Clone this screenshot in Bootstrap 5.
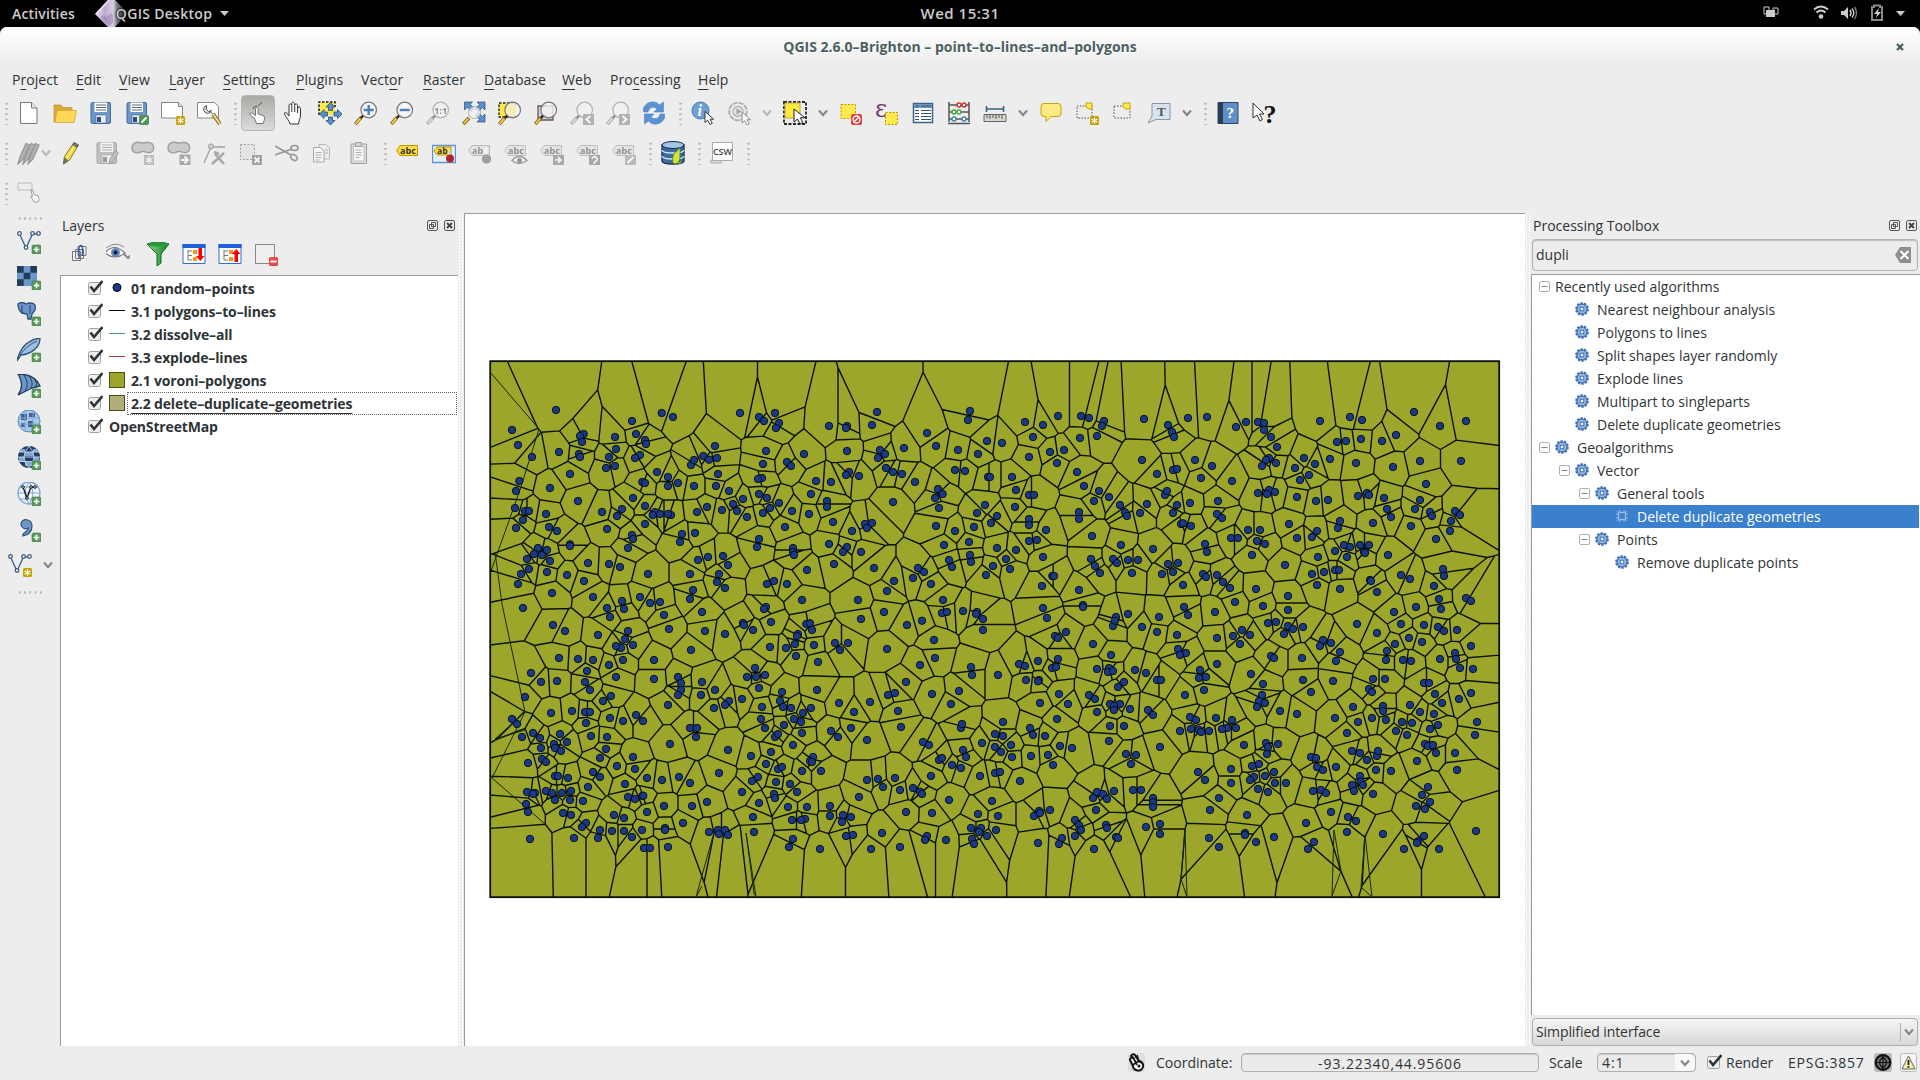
<!DOCTYPE html>
<html lang="en">
<head>
<meta charset="utf-8">
<title>QGIS 2.6.0-Brighton - point-to-lines-and-polygons</title>
<link href="https://cdn.jsdelivr.net/npm/bootstrap@5.3.0/dist/css/bootstrap.min.css" rel="stylesheet">
<style>
:root{--ink:#2e3436;--face:#ededed;--edge:#9b9b99}
body{width:1920px;height:1080px;overflow:hidden;background:#000;color:var(--ink);font:14px/23px "Open Sans","Noto Sans",sans-serif}
.shell-bar{height:27px;color:#ccc;font-weight:600;line-height:27px;letter-spacing:.15px}
.shell-bar .col{flex:1 0 0}
.shell-bar .clock{font-size:15px;letter-spacing:.5px}
.app-logo{width:33px;height:27px;margin:0 -12px 0 20px}
.app-name{letter-spacing:.3px;text-shadow:0 0 2px #000,0 0 2px #000}
.win{height:1053px;background:var(--face);border-radius:7px 7px 0 0}
.win-title{height:38px;line-height:39px;border-radius:7px 7px 0 0;background:linear-gradient(#fff,#ededed);color:#4c5f63;font-weight:700;text-shadow:0 1px #fff}
.menu-row{height:28px;padding-left:12px;line-height:30px}
.menu-row span{white-space:nowrap;letter-spacing:.05px}
.menu-row u,.tree-under{text-underline-offset:4px;text-decoration-thickness:1px}
.tool-row{height:40px;padding-left:0}
.ic{width:24px;height:24px;margin:0 6px;flex:none;display:block;overflow:visible}
.chev{width:10px;height:10px;margin:0 5px;flex:none}
.sep{width:13px;height:24px;flex:none;background:radial-gradient(circle,#b4b4b2 1px,transparent 1.3px) 7px 0/3px 5.3px repeat-y}
.sep.first{width:11px;background-position-x:5px}
.armed{background:linear-gradient(#a7aaa5,#dcdddb);border:1px solid #b8bab6;border-radius:4px;width:34px;height:36px;margin:0 1px;padding:5px 4px}
.armed .ic{margin:0}
.dim{opacity:.5;filter:grayscale(1)}
.side-tools{width:60px;padding-top:4px}
.side-tools .ic{margin:6px 18px 6px 17px}
.hsep{width:25px;height:3px;flex:none;margin-left:17px;background:radial-gradient(circle,#b4b4b2 1px,transparent 1.3px) 0 0/5.3px 3px repeat-x}
.layers-dock{width:398px}
.dock-title{height:25px;line-height:25px;padding-left:2px}
.dock-title svg{width:11px;height:11px;margin-right:3px}
.dock-title svg+svg{margin:0 3px 0 3px}
.layer-tools{height:37px;padding-bottom:5px;padding-left:1px}
.layer-tools .ic:nth-child(2){margin-left:9px}
.layer-tools .ic:nth-child(3){margin-left:10px}
.tree{background:#fff;border:solid var(--edge);border-width:1px 0 0 1px}
.tree .item{height:23px;display:flex;align-items:center;white-space:nowrap;line-height:23px}
.layers{font-weight:700;padding:1px 0 0 27px;letter-spacing:-.15px}
.layers .sym{width:16px;height:16px;margin:0 6px 1px 6px;flex:none}
.tick{width:15px;height:15px;flex:none;overflow:visible}
.layers .tick{margin-bottom:3px}
.focus-row{flex:1;border:1px dotted #666;margin-left:-4px;padding-left:3px;height:23px;line-height:21px;margin-right:1px}
.splitter{width:6px;background:repeating-conic-gradient(#fafafa 0 25%,#e6e6e6 0 50%) 0 0/3px 3px}
.canvas-pane{width:1061px;background:#fff;border:solid var(--edge);border-width:1px 0 0 1px}
.search{height:32px;margin:1px 2px 3px 1px;border:1px solid #b2b2b0;border-radius:4px;background:var(--face);padding:0 6px 0 3px;line-height:22px;box-shadow:inset 0 1px 1px #bbb}
.pm{width:11px;height:11px;margin-right:5px;flex:none}
.algs{letter-spacing:.02px}
.algs .item{line-height:24px}
.gear{width:14px;height:14px;margin:0 8px 2px 0;flex:none}
.l1{padding-left:43px}.l0{padding-left:7px}.lv{padding-left:27px}.lg{padding-left:47px}.ld{padding-left:83px}
.picked{background:#3a80cd;color:#fff;margin-right:1px}
.mode{height:28px;margin:3px 2px 0 1px;border:1px solid #aeaeac;border-radius:4px;background:linear-gradient(#f6f6f6,#d8d8d8);padding-left:3px;line-height:26px;letter-spacing:-.08px}
.drop{border-left:1px solid #b0b0ae}
.status-row{height:34px;padding-bottom:1px}
.status-row>*{flex:none}
.readout{border:1px solid #b0b0ae;border-radius:4px;height:19px;line-height:19px;background:#ebebeb;box-shadow:inset 0 1px 1px #c8c8c8;letter-spacing:.9px}
</style>
</head>
<body>
<svg width="0" height="0" class="position-absolute">
<defs>
<linearGradient id="gl" x1="0" x2="1"><stop offset="0" stop-color="#e9dff2"/><stop offset=".3" stop-color="#bda9d0"/><stop offset=".55" stop-color="#d5d0da"/><stop offset=".68" stop-color="#77737c"/><stop offset="1" stop-color="#111"/></linearGradient>
<linearGradient id="gg" x1="0" x2="1"><stop offset="0" stop-color="#8bd88b"/><stop offset="1" stop-color="#118022"/></linearGradient>
<g id="plus"><rect x="15" y="15" width="9" height="9" rx="1.5" fill="#5a9a5a" stroke="#3d7a3d" stroke-width=".6"/><path d="M19.500 16.700v5.600M16.700 19.500h5.600" stroke="#fff" stroke-width="1.700"/></g>
<g id="star"><rect x="15" y="15" width="9" height="9" rx="1.500" fill="#c9a000"/><path d="M19.500 16.300v6.400M16.500 18l6 3.200M22.500 18l-6 3.200" stroke="#fff" stroke-width="1.200"/></g>
<g id="cursor"><path d="M0 0v11l2.700-2.300 2.200 4.300 2.400-1.200-2.200-4.100h3.500z" fill="#fff" stroke="#222" stroke-width=".9"/></g>
<symbol id="new" viewBox="0 0 24 24"><path d="M3.500 1.500h11l5.500 5.500V22.500h-16.500z" fill="#fff" stroke="#777"/><path d="M14.500 1.500v5.500h5.500" fill="#e8e8e8" stroke="#777"/></symbol>
<symbol id="open" viewBox="0 0 24 24"><path d="M1 4h7l2 2.500h9V10H5L2.500 21H1z" fill="#dca83a" stroke="#c2912c" stroke-width=".7"/><path d="M4 9.500h19.500L21 21.500H2z" fill="#fdd856" stroke="#d6a93a" stroke-width=".8"/></symbol>
<symbol id="save" viewBox="0 0 24 24"><rect x="2" y="1.500" width="19.500" height="21" rx="1.500" fill="#6d97c8" stroke="#426a9a"/><path d="M5.500 1.500h12.500v9.500H5.500z" fill="#fff"/><path d="M7 4h10M7 6.500h10M7 9h10" stroke="#667"/><path d="M7 14h10v8H7z" fill="#eee" stroke="#426a9a" stroke-width=".6"/><path d="M8 16h4v5H8z" fill="#2b5080"/></symbol>
<symbol id="saveas" viewBox="0 0 24 24"><use href="#save"/><rect x="14" y="14" width="10" height="10" rx="2" fill="#4f9358"/><path d="M16.500 21.500l5-5" stroke="#fff" stroke-width="2"/></symbol>
<symbol id="compose" viewBox="0 0 24 24"><path d="M.5 1.500h17l4 4V17H.5z" fill="#fff" stroke="#888"/><path d="M17.500 1.500v4h4" fill="#ddd" stroke="#888"/><use href="#star"/></symbol>
<symbol id="compman" viewBox="0 0 24 24"><path d="M.5 1.500h17l4 4V17H.5z" fill="#fff" stroke="#888"/><path d="M9.500 4.500a4 4 0 1 0 5 5l-3 1-2-2zM12 10l5 4" fill="#ddd" stroke="#555"/><path d="M16 13l7 10" stroke="#7d6a33" stroke-width="4"/><path d="M16 13l7 10" stroke="#f2dc82" stroke-width="2"/></symbol>
<symbol id="touch" viewBox="0 0 24 24"><path d="M10.500 22.500l-2-5L4.500 14c-1.500-2 1-2.600 2-1.500l3 2V8c0-2 2.600-2 2.600 0v5l5 1.500c2 1 1.400 3 1 5l-1 3z" fill="#fff" stroke="#666" stroke-width=".9"/><path d="M7 8a4 4 0 0 1 4-3M12 5l4-4" stroke="#444" fill="none" stroke-width=".9"/></symbol>
<symbol id="pan" viewBox="0 0 24 24"><path d="M8 23c0-3-4-6-5.500-10C2 11 4.500 11 5.500 13L7 15V4.500c0-2 2.500-2 2.700 0V3c0-2.300 2.800-2.300 3 0v1.500c.2-2 2.800-2 2.900 0V7c.4-1.600 2.700-1.400 2.900.5V14c0 3-1.500 5-2 9z" fill="#fff" stroke="#333"/><path d="M9.800 5v6M12.700 5v6M15.600 6v6" stroke="#333"/></symbol>
<symbol id="pansel" viewBox="0 0 24 24"><path d="M1 1h16v13H1z" fill="#ffe94a"/><path d="M1 14V1h16v5" fill="none" stroke="#222" stroke-width="1.600" stroke-dasharray="2.500 1.500"/><path d="M12.500 1.500l4.500 4.500h-2.500v3.500h-4V6H8zM12.500 24l4.500-4.500h-2.500V16h-4v3.500H8zM1.500 13L6 8.500v2.500h3.500v4H6v2.500zM24 13l-4.500-4.500v2.500H16v4h3.500v2.500z" fill="#5c8fc7" stroke="#244f7c" stroke-width=".8"/></symbol>
<g id="lens"><path d="M9.500 14l-3 3.500" stroke="#222" stroke-width="2.600"/><path d="M7 16.500L1.300 23" stroke="#6a5520" stroke-width="3.400"/><path d="M6.300 17.400L1.700 22.600" stroke="#ffce31" stroke-width="1.900"/><circle cx="14.700" cy="9" r="7.800" fill="#f5f5f3" fill-opacity=".8" stroke="#777" stroke-width="1.200"/></g>
<symbol id="zin" viewBox="0 0 24 24"><use href="#lens"/><path d="M14.700 4v10M9.700 9h10" stroke="#4c7fb8" stroke-width="2.400"/></symbol>
<symbol id="zout" viewBox="0 0 24 24"><use href="#lens"/><path d="M9.700 9h10" stroke="#4c7fb8" stroke-width="2.400"/></symbol>
<symbol id="z11" viewBox="0 0 24 24"><use href="#lens"/><text x="14.700" y="12.500" font-size="9.500" font-weight="700" text-anchor="middle" fill="#333">1:1</text></symbol>
<symbol id="zfull" viewBox="0 0 24 24"><path d="M2.500 1h8L8.200 3.300l4 4-3 3-4-4L2.500 9zM23 1v8l-2.500-2.500-4 4-3-3 4-4L15 1zM23 21h-8l2.500-2.500-4-4 3-3 4 4L23 13z" fill="#5c8fc7" stroke="#244f7c" stroke-width=".7"/><path d="M7 17L1.300 23" stroke="#6a5520" stroke-width="3.400"/><path d="M6.300 17.600L1.700 22.600" stroke="#ffce31" stroke-width="1.900"/><circle cx="12.500" cy="11.500" r="6" fill="#f2f2f0" fill-opacity=".75" stroke="#999" stroke-width=".8"/></symbol>
<symbol id="zsel" viewBox="0 0 24 24"><path d="M1 2h16v14H1z" fill="#ffe94a" stroke="#222" stroke-width="1.400" stroke-dasharray="2.500 1.500"/><use href="#lens"/><path d="M9 4.500h9v9H9z" fill="#f6eeb2"/></symbol>
<symbol id="zlay" viewBox="0 0 24 24"><path d="M4 5h15v14H4z" fill="#d8ccd8" stroke="#665566" stroke-width="1.300"/><use href="#lens"/></symbol>
<symbol id="zlast" viewBox="0 0 24 24"><use href="#lens"/><rect x="13" y="13" width="11" height="11" fill="#777"/><path d="M20.500 15l-4 3.500 4 3.500" stroke="#fff" stroke-width="2" fill="none"/></symbol>
<symbol id="znext" viewBox="0 0 24 24"><use href="#lens"/><rect x="13" y="13" width="11" height="11" fill="#777"/><path d="M16.500 15l4 3.500-4 3.500" stroke="#fff" stroke-width="2" fill="none"/></symbol>
<symbol id="refresh" viewBox="0 0 24 24"><path d="M1.500 11V7c3-7 12-8 16-3l4-3v10H12l3-3C12 5 7 6 6 11zM22.500 13v4c-3 7-12 8-16 3l-4 3V13H12l-3 3c3 3 8 2 9-3z" fill="#5b93d2" stroke="#4a82c0" stroke-width=".6"/></symbol>
<symbol id="info" viewBox="0 0 24 24"><circle cx="9.500" cy="9.500" r="8.500" fill="#6f9fd4" stroke="#4a79ae"/><text x="6.500" y="15" font-family="Liberation Serif" font-style="italic" font-weight="700" font-size="16" fill="#fff">i</text><use href="#cursor" x="14" y="10.500"/></symbol>
<symbol id="act" viewBox="0 0 24 24"><circle cx="11" cy="10.500" r="8.800" fill="#eee" stroke="#777" stroke-width="2" stroke-dasharray="5 1"/><circle cx="11" cy="10.500" r="5" fill="#ddd" stroke="#777" stroke-width="1.300"/><path d="M9.500 7.500l5 3-5 3z" fill="#555"/><use href="#cursor" x="15" y="11"/></symbol>
<symbol id="select" viewBox="0 0 24 24"><path d="M1 1h22v22H1z" fill="none" stroke="#222" stroke-width="1.800" stroke-dasharray="3 1.500"/><path d="M2 2h15v15H2z" fill="#ffe93f" stroke="#b9a84a"/><path d="M11 8v13l3.500-3 2.500 5 2.800-1.500-2.500-4.800h4.500z" fill="#fff" stroke="#222"/></symbol>
<symbol id="desel" viewBox="0 0 24 24"><path d="M2 3.500h14.500v14H2z" fill="#ffe94f" stroke="#b89600" stroke-dasharray="2 1.500"/><rect x="12" y="13" width="11" height="11" rx="2" fill="#e04040"/><circle cx="17.500" cy="18.500" r="3.500" fill="none" stroke="#fff" stroke-width="1.300"/><path d="M15 21l5-5" stroke="#fff" stroke-width="1.300"/></symbol>
<symbol id="expr" viewBox="0 0 24 24"><text x="0" y="15.500" font-family="DejaVu Serif" font-size="24" fill="#6d3a6d">ε</text><path d="M10.500 11.500h12v12h-12z" fill="#ffe94f" stroke="#b89600" stroke-dasharray="2 1.500"/></symbol>
<symbol id="table" viewBox="0 0 24 24"><path d="M2.500 2.500h19v19h-19z" fill="#fff" stroke="#3d6382" stroke-width="1.500"/><path d="M3 3h18v4H3z" fill="#6c9ac4"/><path d="M4 5h4M10 5h10M4 9.500h4M10 9.500h10M4 12.500h4M10 12.500h10M4 15.500h4M10 15.500h10M4 18.500h4M10 18.500h10" stroke="#35566f" stroke-width="1.200"/></symbol>
<symbol id="abacus" viewBox="0 0 24 24"><path d="M2 1v20M22 1v20M1 22.500h22M2 4h20M2 11h20M2 18h20" stroke="#555" stroke-width="1.500"/><g fill="#fff" stroke-width="1.500"><g stroke="#c33"><circle cx="12" cy="4" r="2"/><circle cx="17" cy="4" r="2"/></g><g stroke="#4a4"><circle cx="7" cy="11" r="2"/><circle cx="12" cy="11" r="2"/></g><g stroke="#48a"><circle cx="7" cy="18" r="2"/><circle cx="17" cy="18" r="2"/></g></g></symbol>
<symbol id="ruler" viewBox="0 0 24 24"><path d="M3 8h18M3.500 5v6M20.500 5v6" stroke="#35637e" stroke-width="1.600"/><path d="M1 13.500h22v7H1z" fill="#d6d9d0" stroke="#666"/><path d="M4 14v3M7 14v4M10 14v3M13 14v4M16 14v3M19 14v4" stroke="#555"/></symbol>
<symbol id="tip" viewBox="0 0 24 24"><path d="M5 2.500h14q3 0 3 3v7q0 3-3 3h-7L7 20.500v-5H5q-3 0-3-3v-7q0-3 3-3z" fill="#fbea83" stroke="#c9a300"/></symbol>
<symbol id="bmnew" viewBox="0 0 24 24"><path d="M2 5h15v12H2z" fill="none" stroke="#555" stroke-dasharray="1.500 1.500"/><path d="M11 6V2h6v6h-3z" fill="#ffe94f" stroke="#c9a300"/><use href="#star"/></symbol>
<symbol id="bm" viewBox="0 0 24 24"><path d="M3 5h16v12H3z" fill="none" stroke="#555" stroke-dasharray="1.500 1.500"/><path d="M12 6V2h7v6h-4z" fill="#ffe94f" stroke="#c9a300"/></symbol>
<symbol id="annot" viewBox="0 0 24 24"><path d="M5 2.500h18v16H9L1 22l4-7z" fill="#d9e3ee" stroke="#8a97a5"/><text x="10" y="15" font-family="Liberation Serif" font-weight="700" font-size="13" fill="#555">T</text></symbol>
<symbol id="help" viewBox="0 0 24 24"><path d="M2 1.500h20v21H2z" fill="#5f8fc6" stroke="#27486c"/><path d="M2 1.500h5v21H2z" fill="#2b3d52"/><text x="10.500" y="17" font-family="Liberation Serif" font-size="15" font-weight="700" fill="#fff">?</text></symbol>
<symbol id="what" viewBox="0 0 24 24"><path d="M1 2v15l4-3 3 6 2.500-1.500-3-5.500H12z" fill="#fff" stroke="#333"/><text x="11.500" y="22" font-family="Liberation Serif" font-size="26" font-weight="700" fill="#111">?</text></symbol>
<symbol id="pencils" viewBox="0 0 24 24"><path d="M1 23l2-7 6-13.500 4 1.500-7 14zM6 23l2-7 6-13.500 4 1.500-7 14zM11 23l2-7 5.500-13.500 3.500 1.500-6 14z" fill="#777" stroke="#444" stroke-width="1.300"/></symbol>
<symbol id="pencil" viewBox="0 0 24 24"><path d="M4.500 23l1-7.500L15 1.500l4.500 2.500L10.500 19z" fill="#f2dd3e" stroke="#8b7430"/><path d="M8 17l9-14" stroke="#fff7a0"/><path d="M4.500 23l1-6 3.500 2.500zM15 1.500l4.500 2.500-1.500 2.500-4.500-2.500z" fill="#777" stroke="#555" stroke-width=".6"/></symbol>
<symbol id="saveed" viewBox="0 0 24 24"><use href="#save"/><path d="M14 23l1-5 6-8 2.500 2-6 8.500z" fill="#999" stroke="#555"/></symbol>
<g id="blob"><path d="M1 7c0-4 3-6.500 8-5.500 4 1.500 5-.5 9 0 6 1 6 9 1 10-4 1-5-2-8-1-6 3-10 .5-10-3.500z" fill="#aaa" stroke="#555" stroke-width="1.400"/></g>
<symbol id="addf" viewBox="0 0 24 24"><use href="#blob"/><rect x="13" y="14" width="10" height="10" fill="#888"/><path d="M18 15v8M14.500 17l7 4M21.500 17l-7 4" stroke="#fff" stroke-width="1.300"/></symbol>
<symbol id="movef" viewBox="0 0 24 24"><use href="#blob"/><rect x="12.500" y="13.500" width="11" height="10.500" fill="#666"/><path d="M14 19h6M17.500 15.500l3.500 3.500-3.500 3.500" stroke="#fff" stroke-width="2" fill="none"/></symbol>
<symbol id="node" viewBox="0 0 24 24"><path d="M1 22L8 6l14 0" fill="none" stroke="#555" stroke-width="1.300"/><circle cx="8" cy="5.500" r="2.600" fill="#aaa" stroke="#555"/><path d="M9 23L21 12M12 13l9 10M11 11l5 2" stroke="#666" stroke-width="2.600"/></symbol>
<symbol id="delsel" viewBox="0 0 24 24"><path d="M1.500 3.500h14v15h-14z" fill="#ddd" stroke="#555" stroke-dasharray="2 1.500"/><rect x="13" y="14" width="10" height="10" fill="#555"/><path d="M15.500 16.500l5 5m0-5l-5 5" stroke="#fff" stroke-width="1.900"/></symbol>
<symbol id="cut" viewBox="0 0 24 24"><path d="M0 5l16 9M0 14l17-6" stroke="#444" stroke-width="1.800"/><ellipse cx="19.500" cy="7" rx="3.500" ry="2.500" fill="none" stroke="#444" stroke-width="1.600"/><ellipse cx="19" cy="16.500" rx="3.500" ry="2.500" fill="none" stroke="#444" stroke-width="1.600" transform="rotate(35 19 16.500)"/></symbol>
<symbol id="copy" viewBox="0 0 24 24"><path d="M8 3.500h7l3.500 3.500V18H8z" fill="#eee" stroke="#888"/><path d="M2.500 6.500h7l3.500 3.500v11H2.500z" fill="#fff" stroke="#666"/><path d="M4.500 11.500h6M4.500 14h6M4.500 16.500h6M4.500 19h4M14 9h3M14 12h3" stroke="#777"/></symbol>
<symbol id="paste" viewBox="0 0 24 24"><path d="M4 3h15.500v19.500H4z" fill="#ccc" stroke="#555"/><path d="M6.500 5.500h10.500V20H6.500z" fill="#fff" stroke="#999"/><path d="M8.500 1.500h6v4h-6z" fill="#bbb" stroke="#555"/><path d="M8.500 9h6M8.500 11.500h6M8.500 14h6M8.500 16.500h4" stroke="#777"/></symbol>
<g id="tag"><path d="M4 4.500h17.500v10H4L.7 9.500z" fill="#ffdf35" stroke="#b89600"/><text x="4" y="12.800" font-size="9" font-weight="700" fill="#333">abc</text></g>
<symbol id="abc" viewBox="0 0 24 24"><use href="#tag"/></symbol>
<symbol id="abcp" viewBox="0 0 24 24"><path d="M.5 4.500h23v17H.5z" fill="#e9eff8" stroke="#5d94d8" stroke-width="1.300"/><path d="M5 6h14v8H5l-3-4z" fill="#ffdf35" stroke="#b89600"/><text x="5" y="13" font-size="8.500" font-weight="700" fill="#333">ab</text><path d="M17 9v6" stroke="#ddd" stroke-width="2.500"/><circle cx="18" cy="17.500" r="4" fill="#b3262d"/></symbol>
<symbol id="abcpin" viewBox="0 0 24 24"><path d="M4 4.500h17.500v10H4L.7 9.500z" fill="#ddd" stroke="#888"/><text x="4" y="12.800" font-size="9" font-weight="700" fill="#333">ab</text><path d="M18 7v8" stroke="#fff" stroke-width="3"/><circle cx="18.500" cy="18" r="4.700" fill="#555"/></symbol>
<symbol id="abceye" viewBox="0 0 24 24"><use href="#tag"/><path d="M8 19.500q7-8 15 0-8 6-15 0z" fill="#fff" stroke="#444" stroke-width="1.400"/><circle cx="15.500" cy="19.500" r="2.500" fill="#444"/></symbol>
<symbol id="abcmv" viewBox="0 0 24 24"><use href="#tag"/><rect x="13" y="14" width="11" height="10" fill="#666"/><path d="M15 19h5M18 16l3 3-3 3" stroke="#fff" stroke-width="1.700" fill="none"/></symbol>
<symbol id="abcrot" viewBox="0 0 24 24"><use href="#tag"/><rect x="13" y="14" width="11" height="10" fill="#666"/><path d="M16 18c1-4 6-2 5 1-1 2-3 1-3 4" stroke="#fff" stroke-width="1.600" fill="none"/></symbol>
<symbol id="abced" viewBox="0 0 24 24"><use href="#tag"/><rect x="13" y="14" width="11" height="10" fill="#888"/><path d="M15.500 22l6-6" stroke="#fff" stroke-width="2"/></symbol>
<symbol id="db" viewBox="0 0 24 24"><path d="M1 4v16c0 4 22 4 22 0V4z" fill="#3b6ba3" stroke="#142c4e" stroke-width="1.300"/><ellipse cx="12" cy="4" rx="11" ry="3.500" fill="#a4c4e4" stroke="#142c4e"/><path d="M1 9c0 4 22 4 22 0M1 15c0 4 22 4 22 0" fill="none" stroke="#dce9f5" stroke-width="1.300"/><path d="M12 22c-1-5 0-10 4-12 1-1 2-3 3-3v5c0 5 0 7-2 9 3 0 4 0 4-2 1 3-2 4-5 3-2 1-3 1-4 0z" fill="#d6e334" stroke="#3f7d2a" stroke-width=".8"/></symbol>
<symbol id="csw" viewBox="0 0 24 24"><path d="M1 19h10v3H1z" fill="#ddd" stroke="#aaa"/><path d="M2.500 1.500h20v18h-20z" fill="#fff" stroke="#aaa"/><text x="12.500" y="13.500" font-size="9" font-weight="600" text-anchor="middle" fill="#444">CSW</text></symbol>
<symbol id="drag" viewBox="0 0 24 24"><path d="M1 2h14v7H1z" fill="none" stroke="#888"/><path d="M17 21l-3.500-6 2 .5-1.500-6h2l1 4 4 1 1 4-1 2.500z" fill="#fff" stroke="#555"/><circle cx="14.500" cy="9.500" r="1" fill="#c36"/></symbol>
<g id="vee" fill="#fff" stroke="#3d5f86" stroke-width="1.300"><path d="M2.500 4L9 18 15.500 4H21" fill="none"/><circle cx="2.500" cy="3.500" r="1.800"/><circle cx="9" cy="17.500" r="1.800"/><circle cx="15.500" cy="3.500" r="1.800"/><circle cx="21.500" cy="3.500" r="1.800"/></g>
<symbol id="vadd" viewBox="0 0 24 24"><use href="#vee"/><use href="#plus"/></symbol>
<symbol id="vstar" viewBox="0 0 24 24"><use href="#vee"/><use href="#star"/></symbol>
<symbol id="radd" viewBox="0 0 24 24"><path d="M0 0h20v20H0z" fill="#6d97c8"/><path d="M0 0h6.700v6.700H0zM13.300 0H20v6.700h-6.700zM6.700 6.700h6.600v6.600H6.700zM0 13.300h6.700V20H0z" fill="#223c5c"/><use href="#plus"/></symbol>
<symbol id="pgadd" viewBox="0 0 24 24"><path d="M1 2q4-3 8 0 5-2 8 0 2 1 1 6l-3 4-1 5h-3l-1-5-5-1q-4-3-4-9z" fill="#6d97c8" stroke="#2c4f78" stroke-width="1.300"/><path d="M5 3v8l3 1M13 3v9" stroke="#2c4f78" fill="none" stroke-width="1.200"/><use href="#plus"/></symbol>
<symbol id="sladd" viewBox="0 0 24 24"><path d="M0 23q2-10 9-17 6-5 14-6 0 6-4 10-5 6-15 7z" fill="#9cbfe2" stroke="#2c4f78" stroke-width="1.300"/><path d="M3 17Q10 7 20 3" stroke="#2c4f78" fill="none"/><use href="#plus"/></symbol>
<symbol id="msadd" viewBox="0 0 24 24"><path d="M1 0q17 0 22 12l-8 2-14 7Q8 12 1 0z" fill="#6d97c8" stroke="#223c5c" stroke-width="1.300"/><path d="M7 1q6 9 1 16M12 2q5 7 2 12M17 4q4 5 2 9" fill="none" stroke="#223c5c"/><use href="#plus"/></symbol>
<symbol id="wmsadd" viewBox="0 0 24 24"><circle cx="12" cy="11" r="11" fill="#a9c7e6" stroke="#5b88ba"/><path d="M4 4h6v6H4zM12 3h6v4h-6zM11 11h5v6h-5zM4 13h4v4H4z" fill="#3f648e"/><path d="M1 8h22M1 14h22M8 0v22M16 0v22" stroke="#7fa6d0"/><use href="#plus"/></symbol>
<symbol id="wcsadd" viewBox="0 0 24 24"><circle cx="12" cy="11" r="11" fill="#223c5c"/><path d="M8 6h8v4H8zM2 11h5v4H2zM17 11h5v4h-5zM8 16h8v4H8zM3 3h5v3H3zM16 3h5v3h-5z" fill="#7fa8d6"/><path d="M2 6h20M1 11h22M2 15.500h20M12 0q-10 11 0 22M12 0q10 11 0 22" stroke="#cfe0f2" fill="none" stroke-width=".9"/><use href="#plus"/></symbol>
<symbol id="wfsadd" viewBox="0 0 24 24"><circle cx="12" cy="11" r="11" fill="#eef5fc" stroke="#7fa8d6" stroke-width="1.300"/><path d="M1 11h22M3 5h18M3 17h18M12 0q-8 11 0 22M12 0q8 11 0 22" stroke="#7fa8d6" fill="none"/><path d="M6 5l4 11 4-11h4" fill="none" stroke="#111" stroke-width="1.300"/><g fill="#fff" stroke="#111"><circle cx="6" cy="5" r="1.300"/><circle cx="10" cy="16" r="1.300"/><circle cx="14" cy="5" r="1.300"/><circle cx="18" cy="5" r="1.300"/></g><use href="#plus"/></symbol>
<symbol id="csvadd" viewBox="0 0 24 24"><path d="M4 6c0-6 11-6 11 2 0 6-4 9-9 10l0-2c3-2 5-4 5-6-4 2-7-1-7-4z" fill="#6d97c8" stroke="#2c4f78" stroke-width="1.200"/><use href="#plus"/></symbol>
<symbol id="group" viewBox="0 0 24 24"><path d="M5.500 9.500h8v9h-8zM8.500 7.500h8v9h-8zM11 4.500h8v9h-8z" fill="#f4f4f4" stroke="#777"/><path d="M12 16V5q2-3 3.500 0v9" fill="none" stroke="#2b5796" stroke-width="1.400"/></symbol>
<symbol id="eye" viewBox="0 0 24 24"><path d="M-1 11q9-11 20 0-10 8-20 0z" fill="#fff" stroke="#777" stroke-width="1.200"/><circle cx="9.500" cy="10.500" r="4.500" fill="#5f8cc4"/><circle cx="9.500" cy="10.500" r="2" fill="#112"/><path d="M0 6q9-7 18-1" fill="none" stroke="#888"/><path d="M18 12l4 4 4-4" fill="none" stroke="#888" stroke-width="2"/></symbol>
<symbol id="funnel" viewBox="0 0 24 24"><path d="M1 2q11-4 22 0l-8 10v9l-4 3V12z" fill="url(#gg)" stroke="#0e6b1d"/><ellipse cx="12" cy="2.500" rx="10.500" ry="2" fill="#2b9a3a"/></symbol>
<g id="expb"><path d="M1 2.500h22v19H1z" fill="#fff" stroke="#2a6fd4"/><path d="M.5 2h23v4H.5z" fill="#1d61d8"/><path d="M6 8v10h4M6 9h4M6 13.500h4" stroke="#777" fill="none"/><path d="M11 8h4v4h-4zM11 15h4v4h-4z" fill="#f8951d"/></g>
<symbol id="expand" viewBox="0 0 24 24"><use href="#expb"/><path d="M16.500 6h3.500v8h2.500l-4.200 5-4.300-5h2.500z" fill="#f00"/></symbol>
<symbol id="collapse" viewBox="0 0 24 24"><use href="#expb"/><path d="M16.500 20h3.500v-8h2.500l-4.200-5-4.300 5h2.500z" fill="#f00"/></symbol>
<symbol id="remove" viewBox="0 0 24 24"><path d="M1.500 2.500h19v19h-19z" fill="#efefef" stroke="#888"/><rect x="15" y="15" width="9" height="9" rx="1.500" fill="#e8484c"/><path d="M16.500 19.500h6" stroke="#fff" stroke-width="2"/></symbol>
<symbol id="chv" viewBox="0 0 10 10"><path d="M1 2.500l4 4.500 4-4.500" fill="none" stroke="#888a85" stroke-width="2.200"/></symbol>
<symbol id="tickbox" viewBox="0 0 15 15"><rect x=".5" y="2.500" width="12" height="12" rx="2" fill="#eee" stroke="#a0a0a0"/><path d="M2.500 6.500L6 11 14.500 1" fill="none" stroke="#2e3436" stroke-width="2.600"/></symbol>
<symbol id="float" viewBox="0 0 11 11"><rect x=".5" y=".5" width="10" height="10" rx="1.500" fill="none" stroke="#555"/><path d="M4.500 2.500h4v4h-4zM2.500 4.500h4v4h-4z" fill="none" stroke="#555"/></symbol>
<symbol id="shut" viewBox="0 0 11 11"><rect x=".5" y=".5" width="10" height="10" rx="1.500" fill="none" stroke="#555"/><path d="M3 3l5 5M8 3l-5 5" stroke="#444" stroke-width="1.900"/></symbol>
<symbol id="minus" viewBox="0 0 11 11"><rect x=".5" y=".5" width="10" height="10" rx="1.500" fill="#fff" stroke="#b0b0b0"/><path d="M2.500 5.500h6" stroke="#888"/></symbol>
<symbol id="cog" viewBox="0 0 14 14"><circle cx="7" cy="7" r="5.800" fill="#8fb0dc" stroke="#3c6eb0" stroke-width="2" stroke-dasharray="2.400 1.180"/><circle cx="7" cy="7" r="4.800" fill="#9dbbe2" stroke="#3c6eb0" stroke-width="1"/><rect x="5.200" y="5.200" width="3.600" height="3.600" fill="#e7effa" stroke="#3c6eb0"/></symbol>
<symbol id="cogsel" viewBox="0 0 14 14"><rect x="3.500" y="3.500" width="7" height="7" fill="none" stroke="#9dbbe2" stroke-width="1.300"/><path d="M5 3V1M9 3V1M5 13v-2M9 13v-2M3 5H1M3 9H1M13 5h-2M13 9h-2M2 2l2 2M12 2l-2 2M2 12l2-2M12 12l-2-2" stroke="#9dbbe2"/></symbol>
</defs>
</svg>

<header class="shell-bar d-flex">
  <div class="col d-flex"><span style="margin-left:12px">Activities</span>
    <svg class="app-logo" viewBox="0 0 33 27"><path d="M0 14L13 0h7l13 13-13 14h-7z" fill="url(#gl)"/><path d="M1 14L14 0" stroke="#efe6f5" stroke-width="1.500"/><path d="M5 17l4-2 2 2 5-4 2 2v8l-4 3z" fill="#8d6fb0" opacity=".45"/></svg>
    <span class="app-name position-relative">QGIS Desktop</span>
    <svg width="9" height="27" class="ms-2"><path d="M0 11h9l-4.500 5z" fill="#ccc"/></svg></div>
  <div class="clock">Wed 15:31</div>
  <div class="col d-flex justify-content-end align-items-center">
    <svg width="160" height="27" fill="#ccc"><path d="M4 7h5v7H4zM13 8h5v6h-5z" fill="none" stroke="#ccc"/><path d="M6 10h9v7H6z"/><g fill="none" stroke="#ccc" stroke-width="2"><path d="M54 9.500q7-6 14 0M56.500 12.500q4.500-4 9 0"/></g><circle cx="61" cy="16.500" r="2.300"/><path d="M81 11h3l4-4v12l-4-4h-3z"/><path d="M90 10q2 3 0 6M92 8.500q3.500 4.500 0 9" fill="none" stroke="#ccc" stroke-width="1.400"/><path d="M94.500 7q4 6 0 12" fill="none" stroke="#777" stroke-width="1.400"/><path d="M112 7h2V5.500h6V7h2v13h-10z" fill="none" stroke="#888" stroke-width="2"/><path d="M119 8l-5 6h3l-1 4 5-6h-3z"/><path d="M136 11h9l-4.500 5z"/></svg></div>
</header>

<main class="win d-flex flex-column">
  <div class="win-title d-flex text-center"><span class="flex-fill ps-4">QGIS 2.6.0–Brighton – point–to–lines–and–polygons</span>
    <svg width="8" height="8" class="mt-3 me-3"><path d="M1 1l6 6M7 1L1 7" stroke="#4c5f63" stroke-width="2.400"/></svg></div>
  <nav class="menu-row d-flex" id="menus"></nav>

  <div class="tool-row d-flex align-items-center" data-tools="first new open save saveas compose compman | *touch pan pansel zin zout -z11 zfull zsel zlay -zlast -znext refresh | info -act -v select v desel expr table abacus ruler v tip bmnew bm annot v | help what"></div>
  <div class="tool-row d-flex align-items-center" data-tools="first -pencils n pencil -saveed -addf -movef -node -delsel -cut -copy -paste | abc abcp -abcpin -abceye -abcmv -abcrot -abced | db | csw |"></div>
  <div class="tool-row d-flex align-items-center" data-tools="first -drag"></div>

  <div class="d-flex flex-fill" style="min-height:0">
    <aside class="side-tools d-flex flex-column" id="sideTools">
      <div class="hsep mb-1"></div>
    </aside>

    <section class="layers-dock d-flex flex-column">
      <div class="dock-title d-flex align-items-center"><span class="flex-fill">Layers</span>
        <svg><use href="#float"/></svg><svg><use href="#shut"/></svg></div>
      <div class="layer-tools d-flex align-items-center" data-tools="group eye funnel expand collapse remove"></div>
      <div class="tree layers flex-fill" id="layers"></div>
    </section>
    <div class="splitter"></div>

    <section class="canvas-pane"><svg id="map" width="1060" height="832" viewBox="465 214 1060 832"></svg></section>
    <div class="splitter"></div>

    <section class="d-flex flex-column flex-fill">
      <div class="dock-title d-flex align-items-center"><span class="flex-fill">Processing Toolbox</span>
        <svg><use href="#float"/></svg><svg><use href="#shut"/></svg></div>
      <div class="search d-flex align-items-center"><span class="flex-fill">dupli</span>
        <svg width="16" height="16"><path d="M5 0h11v16H5L0 8z" fill="#8e8e8e"/><path d="M5.500 4l8 8m0-8l-8 8" stroke="#fff" stroke-width="2"/></svg></div>
      <div class="tree algs flex-fill" id="algs"></div>
      <div class="mode d-flex"><span class="flex-fill">Simplified interface</span><div class="drop d-flex align-items-center my-1"><svg class="chev" style="margin:0 3px"><use href="#chv"/></svg></div></div>
    </section>
  </div>

  <footer class="status-row d-flex align-items-center">
    <svg width="17" height="19" style="margin-left:1128px"><rect width="17" height="19" rx="3" fill="#ddd"/><path d="M3 3q3-4 5 1l3 4q5 2 4 6-2 5-7 3-3-1-3-4L2 7q0-3 3-2z" fill="#fff" stroke="#111" stroke-width="2"/><path d="M5 12q5-5 9-3M5 4l4 8M9 2l2 7" fill="none" stroke="#111" stroke-width="1.700"/><circle cx="11" cy="13" r="1.500" fill="#111"/></svg>
    <span style="width:86px;padding-left:11px">Coordinate:</span>
    <div class="readout text-center" style="width:298px;margin-left:10px">-93.22340,44.95606</div>
    <span style="width:58px;padding-left:10px">Scale</span>
    <div class="readout d-flex align-items-center" style="width:99px;padding-left:4px"><span class="flex-fill">4:1</span><span class="bg-light h-100 d-flex align-items-center rounded-end"><svg class="chev"><use href="#chv"/></svg></span></div>
    <svg class="tick" style="margin:0 4px 3px 11px"><use href="#tickbox"/></svg>
    <span style="width:62px">Render</span>
    <span style="width:86px;letter-spacing:.75px">EPSG:3857</span>
    <svg width="18" height="19" class="me-2"><rect width="18" height="19" rx="3" fill="#b9b9b9"/><circle cx="9" cy="9.500" r="7.300" fill="#777" stroke="#111" stroke-width="2.200"/><path d="M1 9.500h16M9 1v17M9 4q-7 5.500 0 11M9 4q7 5.500 0 11" stroke="#111" fill="none" stroke-width="1.200"/></svg>
    <svg width="17" height="19"><rect x=".5" y=".5" width="16" height="18" rx="2" fill="#f4f4f4" stroke="#bbb"/><path d="M8.500 3l6.500 13H2z" fill="#f5efa0" stroke="#666"/><path d="M8.500 7v5M8.500 13v1.800" stroke="#222" stroke-width="1.800"/></svg>
  </footer>
</main>

<script src="https://cdn.jsdelivr.net/npm/bootstrap@5.3.0/dist/js/bootstrap.bundle.min.js"></script>
<script>
// Menu bar: "_" precedes the mnemonic letter, the number is the width of the entry.
[['P_roject',64],['_Edit',43],['_View',50],['_Layer',54],['_Settings',73],['_Plugins',65],['Vect_or',62],['_Raster',61],['_Database',78],['_Web',48],['Pro_cessing',88],['_Help',40]]
.forEach(([t,w])=>menus.insertAdjacentHTML('beforeend',`<span style="width:${w}px">${t.replace(/_(.)/,'<u>$1</u>')}</span>`));

const icon=(id,c='')=>`<svg class="ic ${c}"><use href="#${id}"/></svg>`;
document.querySelectorAll('[data-tools]').forEach(row=>{
  row.innerHTML=row.dataset.tools.split(' ').map(t=>
    t==='first'?'<div class="sep first"></div>':
    t==='|'?'<div class="sep"></div>':
    t==='v'||t==='-v'?`<svg class="chev ${t==='-v'?'dim':''}"><use href="#chv"/></svg>`:
    t==='n'?'<svg class="chev dim" style="margin:0 2px 0 -6px"><use href="#chv"/></svg>':
    t[0]==='*'?`<div class="armed">${icon(t.slice(1))}</div>`:
    t[0]==='-'?icon(t.slice(1),'dim'):icon(t)).join('');
});
sideTools.insertAdjacentHTML('beforeend','vadd radd pgadd sladd msadd wmsadd wcsadd wfsadd csvadd'.split(' ').map(i=>icon(i)).join('')+
  '<div class="d-flex align-items-center" style="margin:-1px 0 0 -9px">'+icon('vstar')+'<svg class="chev" style="margin:0 0 0 -7px"><use href="#chv"/></svg></div><div class="hsep mt-2"></div>');

const line=c=>`<path d="M0 7.500h16" stroke="${c}"/>`, box=c=>`<rect x=".5" y=".5" width="15" height="15" fill="${c}" stroke="#4a4d1a"/>`;
layers.innerHTML=[['01 random–points','<circle cx="8" cy="7.500" r="4" fill="#1a3a86" stroke="#000"/>'],['3.1 polygons–to–lines',line('#000')],['3.2 dissolve–all',line('#3a9a6a')],['3.3 explode–lines',line('#a0401f')],['2.1 voroni–polygons',box('#9ca62b')],['2.2 delete–duplicate–geometries',box('#b1ae7d')],['OpenStreetMap','']]
.map(([t,s],i)=>`<div class="item"><svg class="tick"><use href="#tickbox"/></svg>${s?`<svg class="sym">${s}</svg>`:'<span style="width:6px"></span>'}<span class="${i===5?'focus-row':''}">${i===5?`<u class="tree-under">${t}</u>`:t}</span></div>`).join('');

const cog='<svg class="gear"><use href="#cog"/></svg>', pm='<svg class="pm"><use href="#minus"/></svg>';
algs.innerHTML=[['l0',pm,'Recently used algorithms'],...['Nearest neighbour analysis','Polygons to lines','Split shapes layer randomly','Explode lines','Multipart to singleparts','Delete duplicate geometries'].map(t=>['l1',cog,t]),
 ['l0',pm+cog,'Geoalgorithms'],['lv',pm+cog,'Vector'],['lg',pm+cog,'General tools'],['ld picked',cog.replace('#cog','#cogsel'),'Delete duplicate geometries'],['lg',pm+cog,'Points'],['ld',cog,'Remove duplicate points']]
.map(([c,i,t])=>`<div class="item ${c}">${i}${t}</div>`).join('');

// Random points in four tiles, in thirds of a pixel from each tile's origin.
const tiles=[
[480,350,`228,180 96,240 114,285 156,321 118,393 108,423 105,474 135,483 147,483 129,510 108,534 545,189 579,201 456,213 311,252 300,258 306,276 237,306 297,312 300,321 405,261 408,297 387,321 405,348 378,354 468,252 495,270 498,282 480,315 465,324 270,372 210,414 294,453 366,486 198,492 207,531 231,543 426,477 411,498 459,444 495,468 487,396 495,399 531,366 564,381 564,408 594,399 642,408 633,345 642,330 670,318 687,329 711,324 705,288 714,372 708,408 780,189 837,201 852,213 885,189 897,219 888,234 858,303 849,342 921,336 933,348 972,312 846,384 834,387 747,423 789,447 759,462 771,483 801,501 726,480 681,471 651,486 837,432 861,444 870,474 849,489 897,459 936,483 987,492 993,432 1008,393 1053,396 1041,453 1041,471 1059,516 915,531 525,486 540,492 518,495 573,495 564,492 495,522 606,552 600,576 645,549 456,555 459,567 444,594 381,537 270,583 270,588 174,594 162,612 186,615 201,600 141,627 210,633 147,657 123,672 201,666 261,675 114,702 216,729 312,693 324,639 387,642 420,651 504,672 630,672 654,630 684,621 729,618 744,645 717,672 711,696 735,714 639,720 630,747 666,786 552,795 540,756 510,759 480,741 426,753 432,777 381,774 390,801 339,741 129,774 837,567 831,591 939,594 939,606 942,615 882,693 861,702 921,702 981,660 966,750 858,771 852,777 1047,582 1101,591 1089,606 1143,606 1062,642 1182,654 1116,543 1155,522 1176,519 1161,534 1047,228 1101,228 1098,234 1191,186 1176,225 1101,303 1272,294 1200,300 1215,312 1194,324 1218,354 1239,366 1266,372 1305,396 1107,366 1098,375 1137,378 1239,456 1341,249 1368,288 1434,300 1494,312 1521,273 1470,183 1464,210 1425,360 1455,363 1524,381 1374,417 1388,432 1365,444 1377,474 1515,465 1491,489 1368,528 1425,543 1482,531 1392,585 1467,576 1470,615 1473,636 1407,630 1416,651 1518,675 1314,654 1332,666 1299,684 1242,693 1221,723 1353,702 1134,750 1212,786 1143,807 1389,750 1386,789 1401,786 1449,783 1491,786 1488,792 1509,807`],
[480,620,`219,15 255,33 354,45 444,33 435,57 423,84 408,78 459,75 567,27 675,33 735,42 789,9 792,15 819,30 873,6 633,90 237,114 294,117 339,120 387,135 429,120 522,120 522,177 321,153 315,186 330,210 408,171 153,159 183,186 231,183 393,228 369,243 594,171 603,189 603,210 594,225 666,186 663,225 705,210 747,243 735,255 702,264 786,237 825,144 801,171 828,171 855,165 837,204 870,81 918,84 945,72 954,42 951,48 948,108 979,12 990,10 996,30 1002,75 1014,126 1065,69 1104,69 1080,90 1011,210 1221,87 1281,15 1326,2 1362,60 1365,114 1320,135 1278,186 1245,219 1224,225 1170,246 1254,273 1122,276 1077,249 1113,324 1053,333 1074,351 1161,360 1263,321 1356,222 1413,252 1437,213 1473,141 1476,165 1509,30 135,231 96,297 111,312 126,351 159,339 180,354 183,384 240,342 261,366 222,372 225,384 243,393 144,429 186,417 198,426 213,279 276,273 315,276 330,276 318,309 390,294 429,303 468,285 489,303 333,348 381,351 378,387 360,414 411,438 459,411 465,447 501,474 546,480 597,471 630,489 570,372 564,255 630,324 651,324 648,351 744,390 717,459 813,408 846,261 843,297 855,324 906,216 900,243 909,261 933,264 993,264 969,279 942,297 963,306 912,315 885,351 894,342 966,339 939,375 873,396 858,432 894,447 906,441 834,471 816,483 888,486 930,492 951,516 966,453 999,411 990,423 996,426 1023,453 786,516 837,549 819,591 822,636 882,522 885,534 924,561 981,561 936,600 975,597 963,600 939,657 927,681 1020,687 1050,558 1050,588 1089,585 1113,591 1086,606 1137,531 1161,480 1194,477 1209,501 1245,474 1260,510 1299,504 1320,515 1326,522 1353,468 1377,420 1386,414 1416,435 1443,444 1449,390 1458,411 1506,369 1443,324 1446,312 1329,366 1347,375 1500,468 1407,540 1356,579 1278,576 1206,639 1098,648 1119,645 1173,687 1260,681 1341,648 1335,660 1398,660 1494,582 1473,624 1503,624 1497,636 1476,657 1482,672 1521,648 339,456 360,471 225,468 234,468 264,474 324,501 141,516 165,519 159,522 198,513 216,519 246,519 273,513 225,540 270,540 309,543 138,552 144,576 249,579 273,585 318,609 306,621 282,654 150,657 360,630 354,654 396,633 432,633 402,585 432,594 456,651 486,630 501,576 444,531 465,537 487,528 490,527 435,492 552,558 636,558 681,546 609,609 555,624 555,630 492,684 510,684 564,681 687,636 714,630 717,642 735,630 744,645`],
[990,350,`105,216 159,225 129,261 36,279 204,198 273,198 297,204 342,213 336,228 321,258 270,264 222,300 180,306 117,321 201,339 66,381 0,381 78,420 117,435 132,435 75,471 21,498 3,519 117,507 117,525 168,540 117,573 141,570 21,594 78,600 48,627 9,648 60,657 159,621 187,678 192,678 156,708 159,774 171,804 261,366 282,408 327,423 312,453 357,441 390,465 405,487 411,498 267,486 267,507 306,558 393,585 303,627 315,648 330,669 369,627 381,639 414,630 444,630 426,669 267,720 279,765 279,771 378,801 414,792 462,207 534,225 546,246 552,261 594,204 651,201 456,330 501,372 549,360 561,357 615,330 666,348 633,384 726,393 525,435 531,423 471,462 450,489 561,465 549,489 600,459 684,453 681,492 696,504 573,522 579,520 603,528 489,597 645,582 651,606 534,642 564,639 549,666 516,672 579,705 639,672 648,681 681,675 699,696 720,714 735,756 582,771 594,795 507,801 675,786 738,231 768,216 804,216 822,219 822,240 843,261 861,291 837,324 828,330 816,348 858,339 915,354 942,324 975,342 957,375 930,390 1020,327 804,429 837,420 831,432 855,426 921,441 978,453 1014,450 990,213 1080,201 1116,210 1041,276 1068,273 1113,267 1176,273 1218,255 1272,186 1350,228 1428,213 1098,339 1209,351 1290,333 1413,333 1308,402 1104,438 1131,429 1137,435 1182,444 1191,477 1203,501 1149,519 1290,450 1275,477 1320,486 1326,498 1395,483 1410,495 1383,513 1380,543 1338,567 1263,528 723,564 744,564 774,540 810,540 801,573 825,582 786,615 897,522 921,564 966,561 981,543 1050,513 1044,534 885,645 984,621 966,672 981,705 1002,666 1035,660 1047,660 1035,603 1062,585 1080,591 1071,621 1110,585 1137,585 1122,606 1125,609 1194,615 1140,690 1143,693 1161,726 1050,717 1233,675 1260,687 1359,657 1362,678 1332,708 1347,747 1353,777 1428,744 1443,753 1278,771 1212,786 798,717 819,768 894,738 894,780`],
[990,620,`228,36 195,48 204,54 309,72 369,18 375,2 456,21 501,36 561,45 681,54 729,48 756,30 780,45 750,72 834,9 858,6 894,18 909,27 939,21 882,42 1101,12 1161,39 1233,12 1302,15 1344,21 1362,33 1401,30 1257,54 1296,66 1215,72 1191,93 1188,120 1443,78 1395,99 1398,117 1350,117 1410,144 1449,147 1239,120 1263,123 999,60 1023,69 990,78 1050,96 1038,123 936,114 843,108 852,114 783,162 819,192 681,132 564,87 588,99 570,105 363,105 321,147 357,144 354,156 369,153 402,186 384,201 435,150 468,159 501,180 513,180 87,132 105,138 144,123 204,117 186,144 198,141 24,165 108,180 147,180 144,184 150,249 207,222 234,252 201,297 39,306 120,324 129,345 165,348 15,342 39,348 63,375 15,381 33,396 66,411 123,408 174,405 210,378 246,384 189,435 15,459 30,456 90,483 6,543 24,588 18,630 297,225 315,237 321,276 360,252 390,252 372,258 372,270 420,267 474,270 489,285 360,318 402,318 357,363 408,402 438,405 423,432 510,381 585,225 642,210 627,174 630,150 648,171 600,291 618,300 678,294 726,300 738,324 711,324 696,327 657,333 603,327 570,333 627,330 633,336 816,225 807,243 825,249 801,261 870,273 921,282 963,216 939,180 1029,183 1089,261 1035,294 1071,339 1104,306 1146,294 1179,258 1179,273 1188,300 1137,207 1146,216 1149,177 1185,177 1260,255 1290,276 1302,189 1317,189 1335,222 1356,249 1332,282 1407,237 1443,219 1461,306 1455,345 1344,315 1320,327 1236,306 1266,309 1218,333 1251,345 1305,372 1314,378 1329,375 1338,399 1395,399 1401,450 1281,423 762,375 828,369 834,381 864,372 831,402 963,411 978,414 981,441 999,450 1038,441 1086,393 1110,399 1131,420 1161,408 1164,393 1158,450 1203,453 1110,468 1112,485 1086,495 1092,513 1119,495 1149,522 723,447 723,489 786,438 807,432 792,471 780,480 825,468 852,456 855,489 888,489 804,507 834,516 624,456 645,480 687,534 660,570 771,585 969,513 993,510 1008,519 1023,576 948,609 1074,591 1098,603 1071,636 1179,642 1314,501 1296,525 1320,546 1278,558 1305,567 1458,633 1302,648 1284,664 1281,669 1242,687 1347,687 972,666 954,687 852,651 765,639 765,645 798,666 657,654 687,681 489,534 489,547 489,561 510,612 510,642 468,621 429,510 453,510 321,516 339,522 309,534 351,537 372,513 318,570 255,600 267,615 273,630 255,648 348,615 351,624 378,651 384,654 312,687 144,669 216,654 207,672 132,588 147,573 150,579 180,570`]];
const pts=tiles.flatMap(([ox,oy,s])=>s.split(/\s+/).map(p=>{const[x,y]=p.split(',').map(Number);return[ox+x/3,oy+y/3]}));

// Voronoi cells by clipping the extent with each neighbour's bisector, nearest first.
const L=490.3,T=361.3,R=1499.3,B=897.3;
let cells='';
for(const[px,py]of pts){
  let poly=[[L,T],[R,T],[R,B],[L,B]];
  const near=pts.map(([x,y])=>[x,y,(x-px)**2+(y-py)**2]).filter(n=>n[2]>.01).sort((a,b)=>a[2]-b[2]);
  for(const[qx,qy,d]of near){
    const reach=Math.max(...poly.map(([x,y])=>(x-px)**2+(y-py)**2));
    if(d>4*reach)break;
    const mx=(px+qx)/2,my=(py+qy)/2,side=([x,y])=>(x-mx)*(qx-px)+(y-my)*(qy-py),out=[];
    poly.forEach((a,i)=>{const b=poly[(i+1)%poly.length],sa=side(a),sb=side(b);
      if(sa<=0)out.push(a);
      if(sa*sb<0){const t=sa/(sa-sb);out.push([a[0]+t*(b[0]-a[0]),a[1]+t*(b[1]-a[1])])}});
    poly=out;
  }
  cells+='M'+poly.map(p=>p.map(v=>v.toFixed(1)).join(' ')).join('L')+'z';
}
// Sliver edges left along the border by the polygon layer.
const slivers='M490 372L539 429 520 490 491 571M495 552l7 52 23 108-30 27 30-9M525 712l-33 66 53 46M702 886l-6 11 17-61M754 893l-8-60 10 64zM1187 897l-6-18 4-49zM1334 830l7 41-9 25zM1372 897l-11-10 4-52z';
map.innerHTML=`<rect x="${L}" y="${T}" width="${R-L}" height="${B-T}" fill="#9ca62b" stroke="#111c14" stroke-width="1.600"/>
<path d="${cells}" fill="none" stroke="#0b120c" stroke-width="1.400" stroke-linejoin="round"/><path d="${slivers}" fill="none" stroke="#16280f"/>
<g fill="#1a3a86" stroke="#050a18" stroke-width=".9">${pts.map(([x,y])=>`<circle cx="${x.toFixed(1)}" cy="${y.toFixed(1)}" r="3.700"/>`).join('')}</g>`;
</script>
</body>
</html>
